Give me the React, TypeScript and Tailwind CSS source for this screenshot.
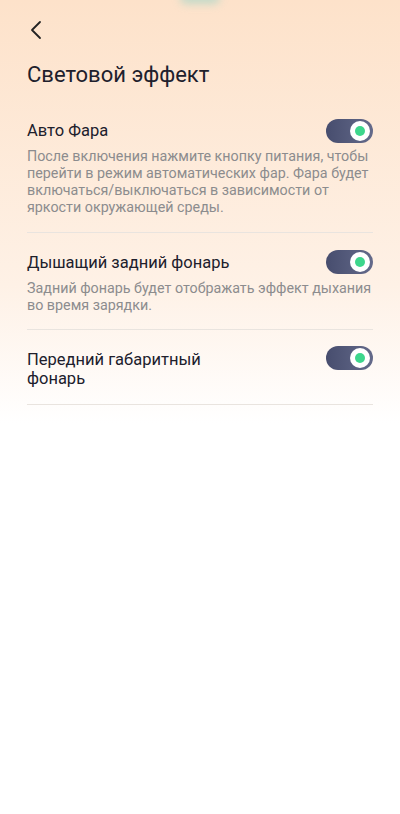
import React from "react";

function Toggle({ className }: { className?: string }) {
  return (
    <div
      className={
        "w-[47px] h-[24px] rounded-full bg-gradient-to-r from-[#474d6e] to-[#646a8a] flex items-center justify-end pr-[3px] shrink-0 " +
        (className || "")
      }
    >
      <div className="w-[20px] h-[20px] rounded-full bg-white flex items-center justify-center">
        <div className="w-[10px] h-[10px] rounded-full bg-[#3dd68c]" />
      </div>
    </div>
  );
}

export default function App() {
  return (
    <div
      className="w-[400px] h-[814px] relative overflow-hidden bg-gradient-to-b from-[#fde2ca] via-[#fef1e6] via-35% to-white to-52%"
      style={{ fontFamily: "Roboto, 'Noto Sans', sans-serif" }}
    >
      <div className="absolute left-[180px] top-[-8px] w-[40px] h-[12px] rounded-full bg-[#a9d6c8] blur-[4px] opacity-70" />
      <div className="px-[27px]">
        <div className="h-[60px] flex items-center">
          <svg width="14" height="20" viewBox="0 0 14 20" className="ml-[2px] mt-[0px]">
            <path d="M11 2 L3 10 L11 18" fill="none" stroke="#222" strokeWidth="1.8" strokeLinecap="round" strokeLinejoin="round" />
          </svg>
        </div>
        <div className="text-[22px] leading-[30px] text-[#20202c]">Световой эффект</div>

        <div className="mt-[30px]">
          {/* Item 1 */}
          <div className="border-b border-[#e9e4df] pb-[16px]">
            <div className="flex items-start justify-between h-[23px]">
              <div className="text-[16.5px] leading-[21px] text-[#20202c]">Авто Фара</div>
              <Toggle className="mt-[-1px]" />
            </div>
            <div className="text-[14.3px] leading-[17px] text-[#8c8c8e] mt-[5px]">
              После включения нажмите кнопку питания, чтобы перейти в режим автоматических фар. Фара будет включаться/выключаться в зависимости от яркости окружающей среды.
            </div>
          </div>

          {/* Item 2 */}
          <div className="border-b border-[#e9e4df] pt-[19px] pb-[15px]">
            <div className="flex items-start justify-between h-[23px]">
              <div className="text-[16.5px] leading-[21px] text-[#20202c]">Дышащий задний фонарь</div>
              <Toggle className="mt-[-2px]" />
            </div>
            <div className="text-[14.3px] leading-[17px] text-[#8c8c8e] mt-[5px]">
              Задний фонарь будет отображать эффект дыхания во время зарядки.
            </div>
          </div>

          {/* Item 3 */}
          <div className="border-b border-[#e9e4df] pt-[20px] pb-[16px]">
            <div className="flex items-start justify-between">
              <div className="text-[16.5px] leading-[19px] text-[#20202c]">
                Передний габаритный
                <br />
                фонарь
              </div>
              <Toggle className="mt-[-4px]" />
            </div>
          </div>
        </div>
      </div>
    </div>
  );
}
